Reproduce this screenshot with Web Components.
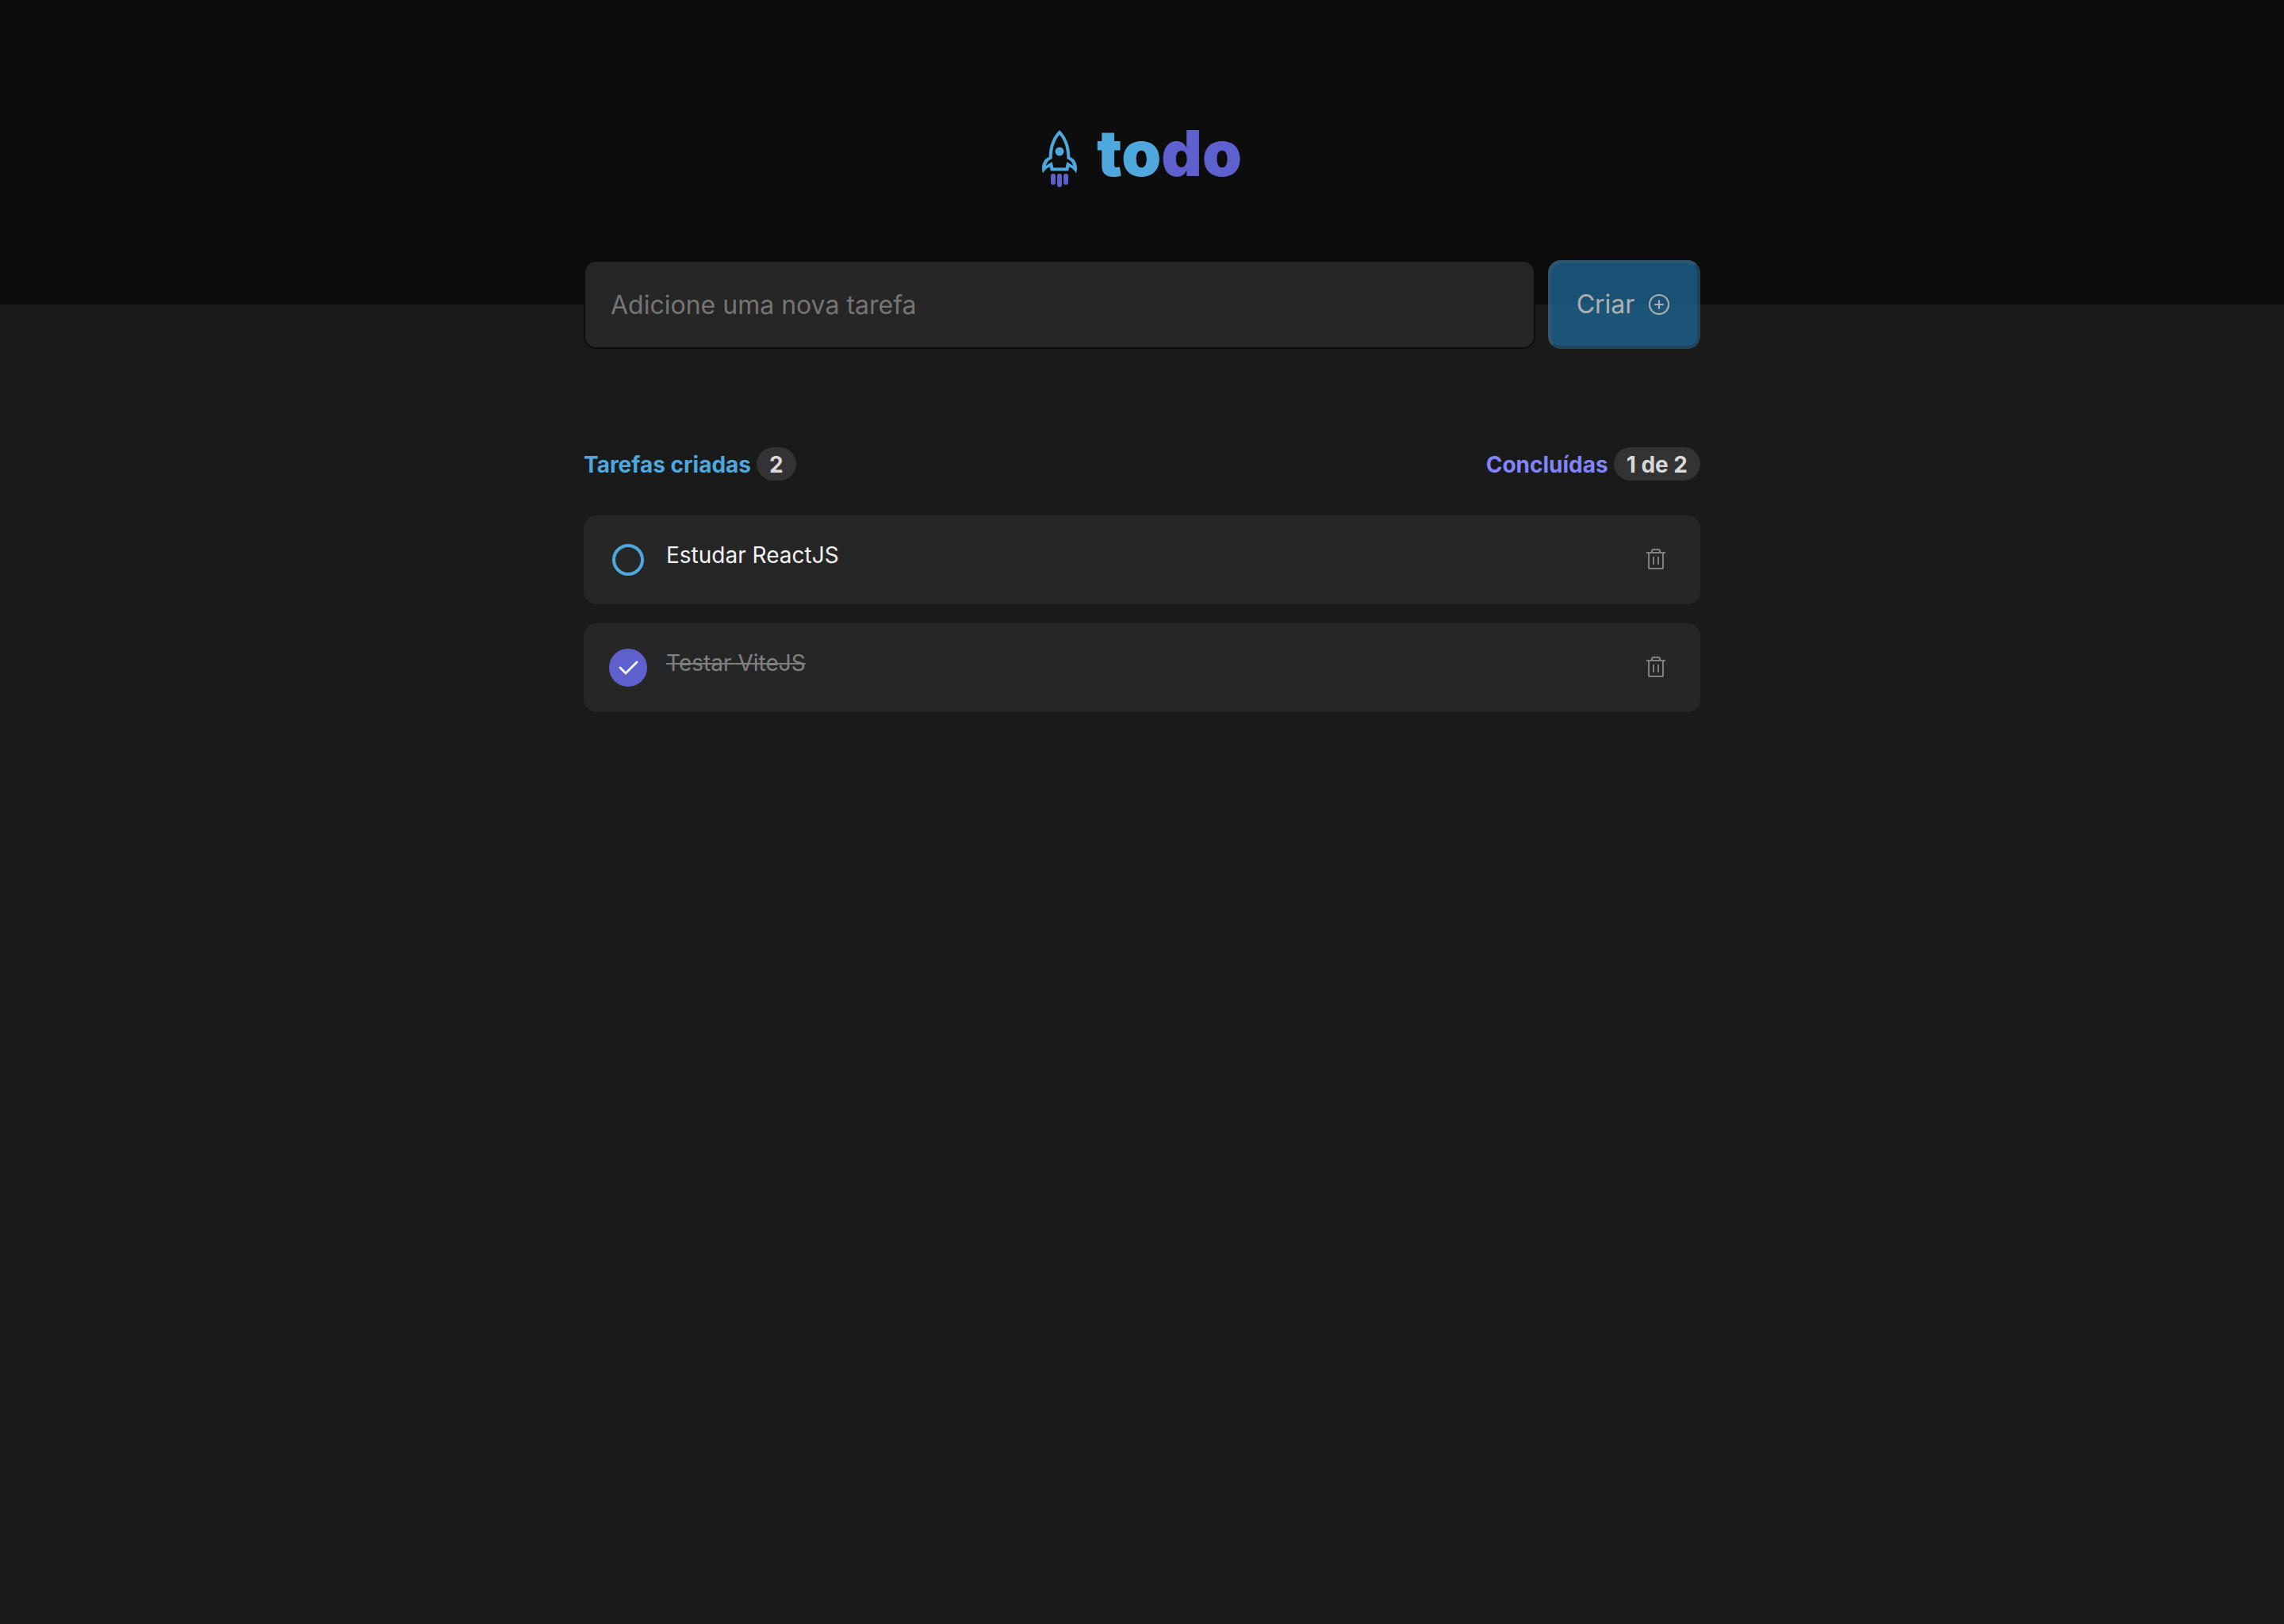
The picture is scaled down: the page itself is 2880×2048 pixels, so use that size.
<!DOCTYPE html>
<html lang="pt-BR">
<head>
<meta charset="utf-8">
<title>todo</title>
<style>
  :root {
    --gray-700: #0d0d0d;
    --gray-600: #1a1a1a;
    --gray-500: #262626;
    --gray-400: #333333;
    --gray-300: #808080;
    --gray-200: #d9d9d9;
    --gray-100: #f2f2f2;
    --blue: #4ea8de;
    --blue-dark: #1e6f9f;
    --purple: #8284fa;
    --purple-dark: #5e60ce;
  }
  body {
    margin: 0;
    min-height: 100vh;
    background: var(--gray-600);
    color: var(--gray-100);
    font-family: Inter, "Noto Sans", sans-serif;
    font-size: 28px;
    line-height: 36px;
  }
</style>
</head>
<body>
<todo-app></todo-app>
<script>
  const define = (name, html, setup) => {
    const template = document.createElement('template');
    template.innerHTML = html;
    customElements.define(name, class extends HTMLElement {
      constructor() {
        super();
        this.attachShadow({ mode: 'open' }).append(template.content.cloneNode(true));
      }
      connectedCallback() {
        if (setup) setup(this, this.shadowRoot);
      }
    });
  };

  define('todo-logo', `
    <style>
      :host { display: flex; align-items: flex-start; justify-content: center; gap: 25px; }
      svg { display: block; width: 44px; height: 72px; margin-top: 20px; }
      h1 { margin: 0; font-size: 80px; line-height: 98px; font-weight: 900; color: var(--blue); }
      span { color: var(--purple-dark); }
    </style>
    <svg viewBox="0 0 44 72" fill="none" aria-hidden="true">
      <path fill="#4EA8DE" fill-rule="evenodd" d="M22 0C15 7 8.700 18 8.700 34C3 36 0 42 0 48C0 51 .6 53 1 54.500C3 51 5.500 48 9.500 46.500L11 51.500H33L34.500 46.500C38.500 48 41 51 43 54.500C43.400 53 44 51 44 48C44 42 41 36 35.300 34C35.300 18 29 7 22 0ZM22 6C16 13 12.700 22 12.700 36C8 38 5.500 41 5 45L12.500 40L14.500 47.500H29.500L31.500 40L39 45C38.500 41 36 38 31.300 36C31.300 22 28 13 22 6Z"/>
      <circle cx="22" cy="27" r="5.500" fill="#4EA8DE"/>
      <path d="M14 58v8M22 58v11M30 58v8" stroke="#5E60CE" stroke-width="6" stroke-linecap="round"/>
    </svg>
    <h1>to<span>do</span></h1>
  `);

  define('todo-header', `
    <style>
      :host { display: flex; flex-direction: column; align-items: center; box-sizing: border-box; height: 384px; padding-top: 144px; background: var(--gray-700); }
    </style>
    <slot></slot>
  `);

  define('new-task', `
    <style>
      :host { display: block; }
      form { display: flex; gap: 16px; margin: 0; }
      input, button { box-sizing: border-box; height: 112px; border-radius: 16px; font: inherit; font-size: 32px; }
      input { flex: 1; min-width: 0; padding: 0 32px; border: 2px solid var(--gray-700); background: var(--gray-500); color: var(--gray-100); }
      input::placeholder { color: #757575; opacity: 1; }
      button { display: flex; align-items: center; justify-content: center; gap: 15px; width: 192px; padding: 0; border: 4px solid; border-color: #3d769d #245978 #245978 #3d769d; background: var(--blue-dark); color: var(--gray-100); opacity: 0.7; }
      svg { display: block; width: 32px; height: 32px; }
    </style>
    <form>
      <input type="text" name="task" aria-label="Nova tarefa" placeholder="Adicione uma nova tarefa">
      <button type="submit" disabled>Criar
        <svg viewBox="0 0 32 32" fill="none" stroke="currentColor" stroke-width="2" stroke-linecap="round" aria-hidden="true">
          <circle cx="16" cy="16" r="12"/><path d="M11 16h10M16 11v10"/>
        </svg>
      </button>
    </form>
  `);

  define('task-count', `
    <style>
      :host { display: flex; align-items: baseline; gap: 7px; font-weight: 700; color: var(--blue); }
      :host([kind="done"]) { color: var(--purple); }
      .count { padding: 4px 16px 2px; border-radius: 999px; background: var(--gray-400); color: var(--gray-200); }
    </style>
    <slot></slot>
    <span class="count"><slot name="count"></slot></span>
  `);

  define('task-item', `
    <style>
      :host { display: flex; align-items: flex-start; gap: 24px; padding: 32px; border-radius: 16px; background: var(--gray-500); }
      label { flex: 1; display: flex; align-items: flex-start; gap: 24px; min-width: 0; }
      input { appearance: none; flex: none; display: grid; width: 48px; height: 48px; margin: 0; padding: 4px; }
      input::before { content: ""; box-sizing: border-box; border: 4px solid var(--blue); border-radius: 50%; }
      input:checked { padding: 0; border-radius: 50%; background: var(--purple-dark); }
      input:checked::before { display: none; }
      .box { display: grid; }
      .box > * { grid-area: 1 / 1; }
      .tick { display: none; width: 48px; height: 48px; pointer-events: none; }
      input:checked + .tick { display: block; }
      :host([done]) .text { color: var(--gray-300); text-decoration: line-through; }
      button { flex: none; width: 48px; height: 48px; padding: 0; border: 0; background: none; color: var(--gray-300); }
      button svg { display: block; width: 48px; height: 48px; }
    </style>
    <label>
      <span class="box">
        <input type="checkbox">
        <svg class="tick" viewBox="0 0 48 48" fill="none" stroke="#F2F2F2" stroke-width="3" stroke-linecap="round" aria-hidden="true"><path d="M14 24l7 7L35 17"/></svg>
      </span>
      <span class="text"><slot></slot></span>
    </label>
    <button type="button" aria-label="Excluir tarefa">
      <svg viewBox="0 0 48 48" fill="none" stroke="currentColor" stroke-width="2" aria-hidden="true">
        <path d="M12 15H36M15 15V34Q15 35 16 35H32Q33 35 33 34V15M19 15V13Q19 11 21 11H27Q29 11 29 13V15M21 20V30M27 20V30"/>
      </svg>
    </button>
  `, (host, root) => { root.querySelector('input').checked = host.hasAttribute('done'); });

  define('todo-app', `
    <style>
      :host { display: block; }
      main { box-sizing: border-box; width: 100%; max-width: 1408px; margin: -56px auto 0; }
      .counts { display: flex; justify-content: space-between; margin: 124px 0 44px; }
      .tasks { display: flex; flex-direction: column; gap: 24px; }
    </style>
    <todo-header><todo-logo></todo-logo></todo-header>
    <main>
      <new-task></new-task>
      <div class="counts">
        <task-count>Tarefas criadas<span slot="count">2</span></task-count>
        <task-count kind="done">Concluídas<span slot="count">1 de 2</span></task-count>
      </div>
      <div class="tasks">
        <task-item>Estudar ReactJS</task-item>
        <task-item done>Testar ViteJS</task-item>
      </div>
    </main>
  `);
</script>
</body>
</html>
